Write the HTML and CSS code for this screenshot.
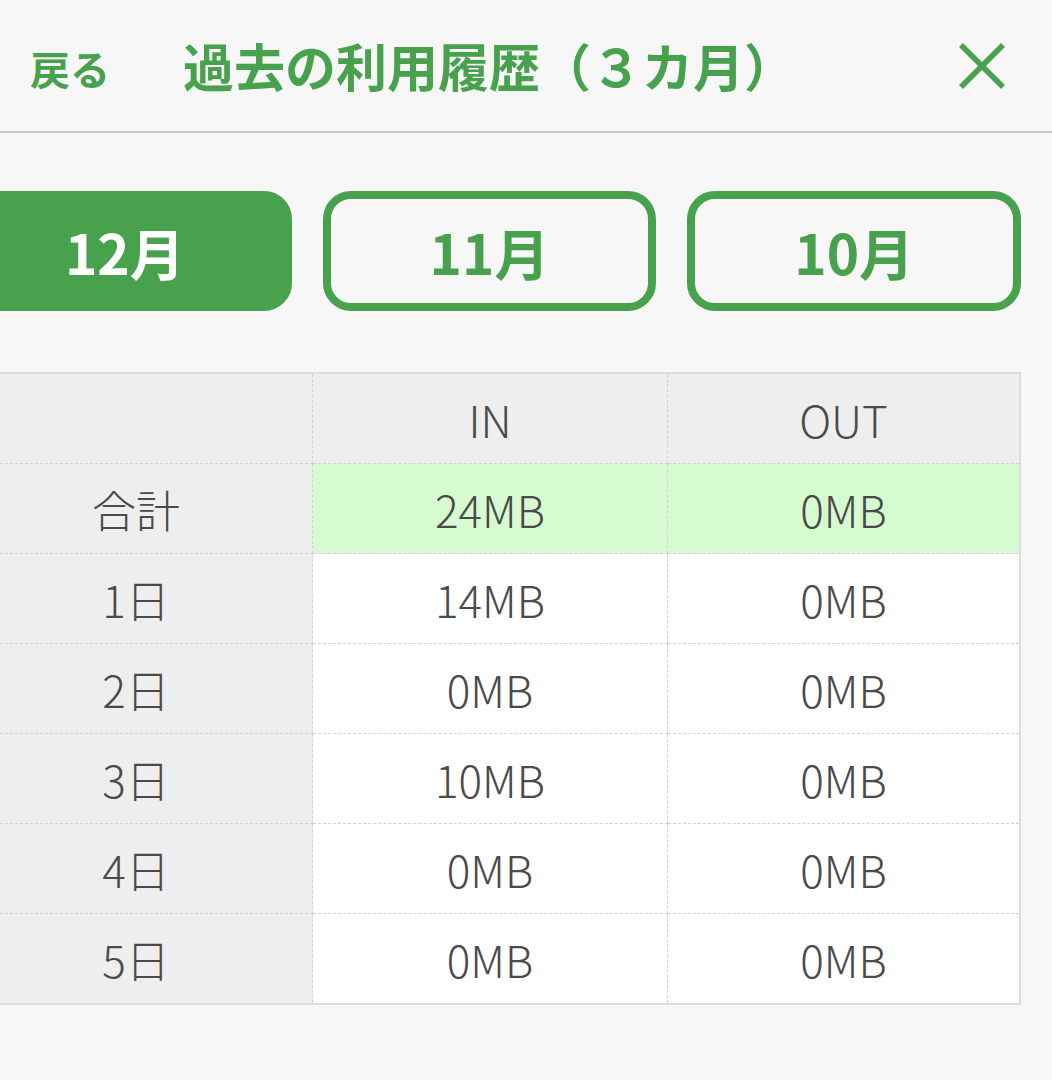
FILE: index.html
```html
<!DOCTYPE html>
<html lang="ja">
<head>
<meta charset="utf-8">
<title>過去の利用履歴</title>
<link rel="stylesheet" href="styles.css">
</head>
<body>
<header class="topbar">
  <a class="back" href="#">戻る</a>
  <h1 class="title">過去の利用履歴（３カ月）</h1>
  <button class="close" type="button" aria-label="閉じる">
    <svg width="48" height="48" viewBox="0 0 48 48"><path d="M3 3 L45 45 M45 3 L3 45" stroke="#48a14c" stroke-width="5.5" fill="none"/></svg>
  </button>
</header>
<main class="content">
  <nav class="months">
    <button class="month active" type="button">12月</button>
    <button class="month" type="button">11月</button>
    <button class="month" type="button">10月</button>
  </nav>
  <table class="usage">
    <colgroup><col class="c-label"><col class="c-in"><col class="c-out"></colgroup>
    <thead>
      <tr><th class="label"></th><th>IN</th><th>OUT</th></tr>
    </thead>
    <tbody>
      <tr class="total"><th class="label">合計</th><td>24MB</td><td>0MB</td></tr>
      <tr><th class="label">1日</th><td>14MB</td><td>0MB</td></tr>
      <tr><th class="label">2日</th><td>0MB</td><td>0MB</td></tr>
      <tr><th class="label">3日</th><td>10MB</td><td>0MB</td></tr>
      <tr><th class="label">4日</th><td>0MB</td><td>0MB</td></tr>
      <tr class="last"><th class="label">5日</th><td>0MB</td><td>0MB</td></tr>
    </tbody>
  </table>
</main>
</body>
</html>
```
FILE: styles.css
```css
html, body {
  margin: 0;
  padding: 0;
  background: #f7f7f7;
  font-family: "Noto Sans CJK JP", "Noto Sans", sans-serif;
  overflow: hidden;
}

.topbar {
  display: flex;
  align-items: center;
  height: 131px;
  padding-left: 30px;
  border-bottom: 2px solid #c6c6c6;
  box-sizing: content-box;
}

.back {
  color: #48a14c;
  font-size: 40px;
  font-weight: 700;
  text-decoration: none;
  line-height: 1;
  margin-top: 4px;
}

.title {
  margin: 0 0 0 73px;
  color: #48a14c;
  font-size: 51px;
  font-weight: 700;
  line-height: 1;
  white-space: nowrap;
}

.close {
  margin-left: auto;
  margin-right: 46px;
  padding: 0;
  border: 0;
  background: none;
  width: 48px;
  height: 48px;
  display: flex;
}

.content {
  margin-left: -42px;
  width: 1063px;
}

.months {
  display: grid;
  grid-template-columns: repeat(3, 1fr);
  gap: 31px;
  margin-top: 58px;
}

.month {
  height: 120px;
  border: 8px solid #48a14c;
  border-radius: 28px;
  background: transparent;
  color: #48a14c;
  font-family: "Noto Sans CJK JP", "Noto Sans", sans-serif;
  font-size: 55px;
  font-weight: 700;
  padding: 0;
  line-height: 1;
}

.month.active {
  background: #48a14c;
  color: #ffffff;
}

.usage {
  margin-top: 61px;
  width: 100%;
  table-layout: fixed;
  border-collapse: separate;
  border-spacing: 0;
  border: 2px solid #dcdcdc;
  color: #4a4a4a;
  font-size: 44px;
  font-weight: 300;
}

.c-label { width: 353px; }
.c-in { width: 355px; }

.usage th,
.usage td {
  height: 89px;
  padding: 0;
  text-align: center;
  font-weight: 300;
  background: #ffffff;
  border-bottom: 1px dashed #d2d2d2;
  border-right: 1px dashed #d2d2d2;
  line-height: 1;
}

.usage th:last-child,
.usage td:last-child {
  border-right: 0;
}

.usage thead th,
.usage th.label {
  background: #eeeeee;
}

.usage .total td {
  background: #d7fbd0;
}

.usage .last th,
.usage .last td {
  border-bottom: 0;
}
```
